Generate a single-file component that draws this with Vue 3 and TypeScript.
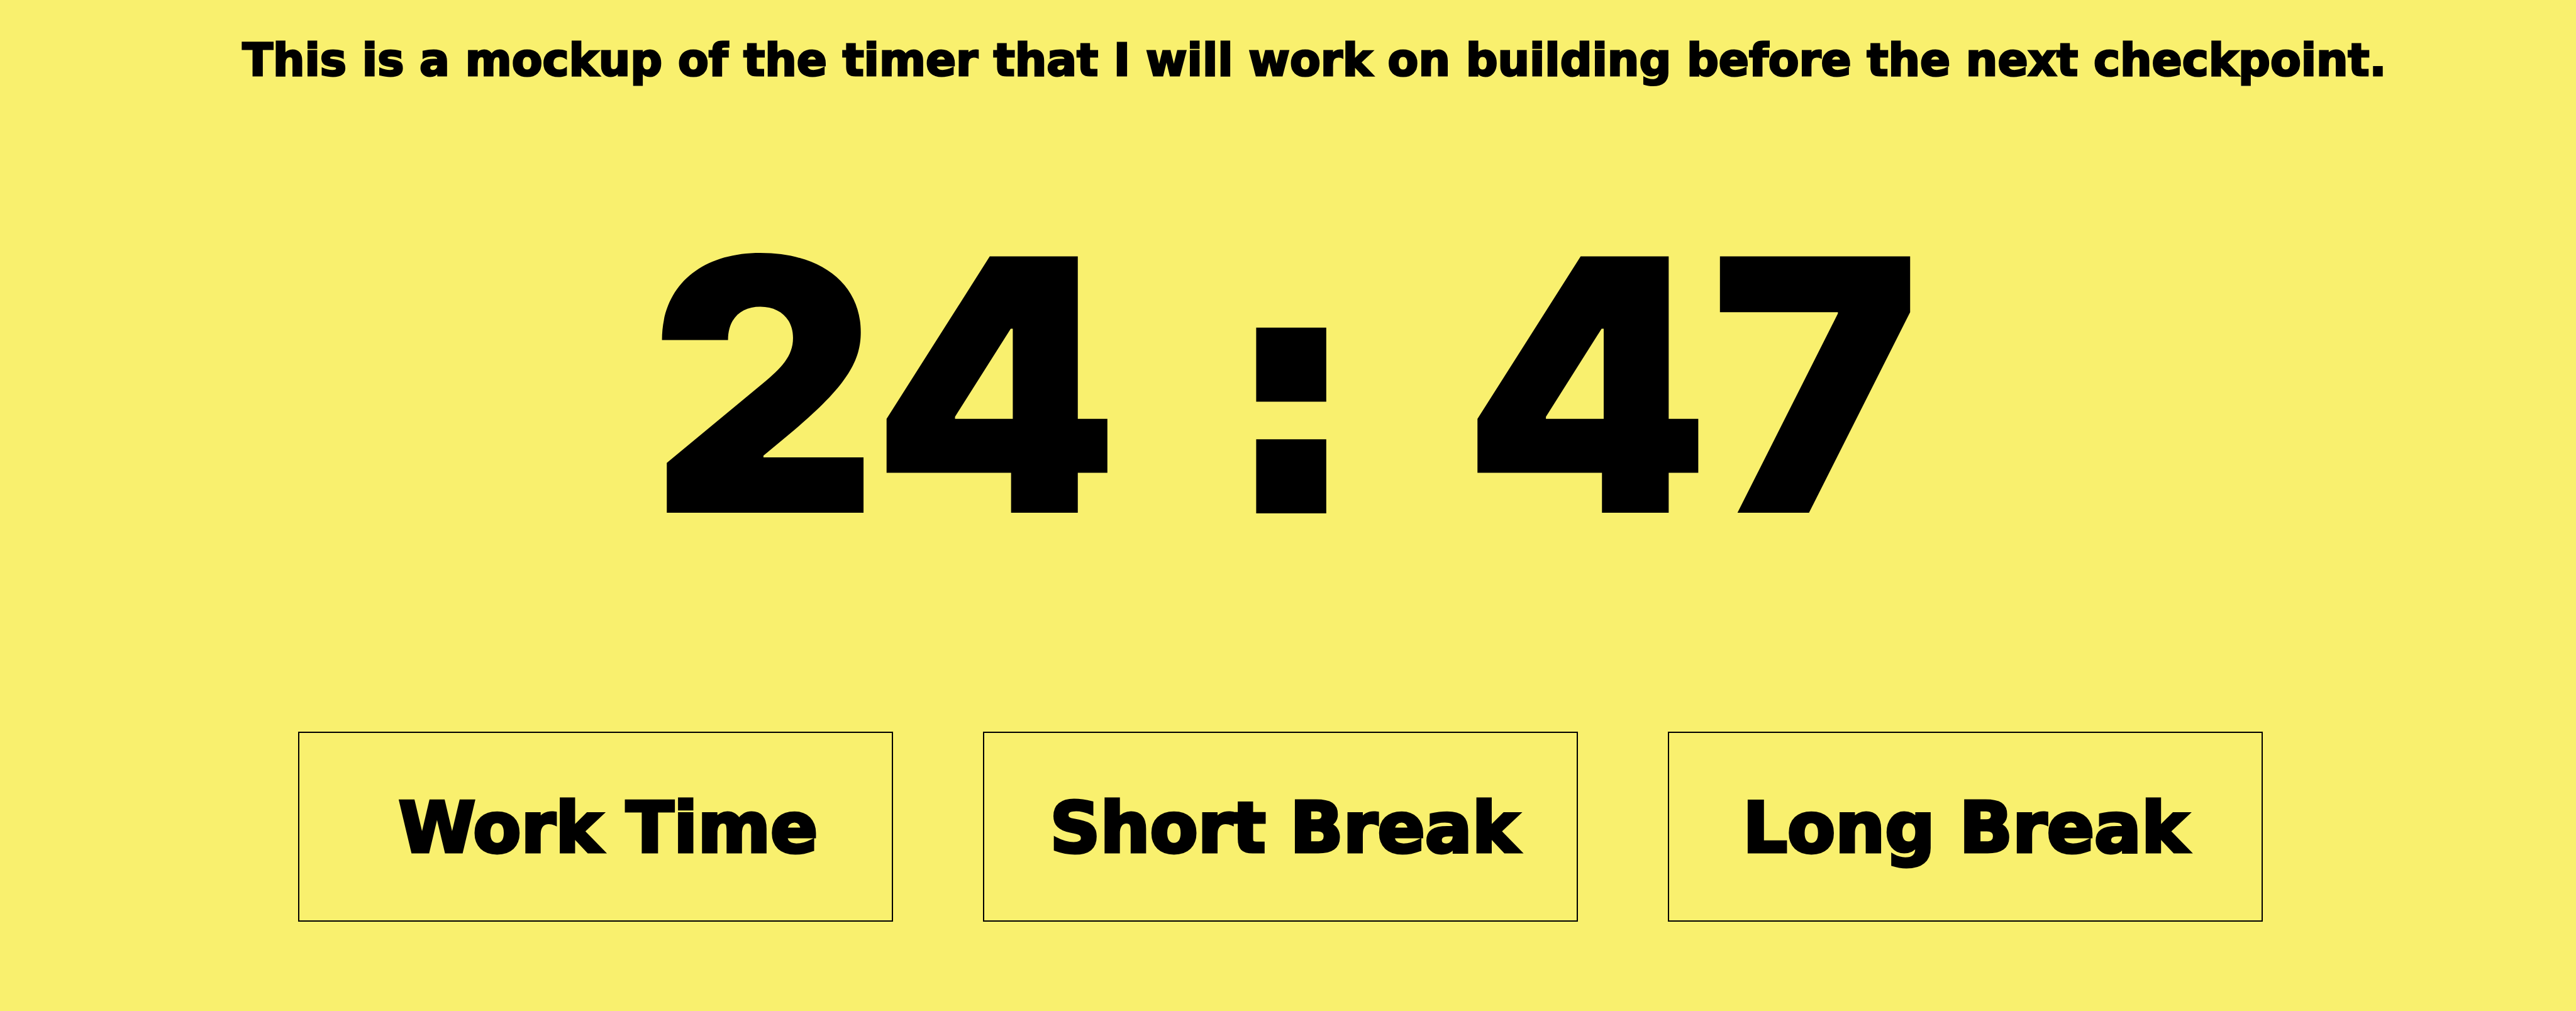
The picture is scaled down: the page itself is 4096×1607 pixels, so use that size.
<script setup lang="ts">
import { ref } from 'vue'

interface Mode {
  id: string
  label: string
}

const modes: Mode[] = [
  { id: 'work', label: 'Work Time' },
  { id: 'short', label: 'Short Break' },
  { id: 'long', label: 'Long Break' },
]

const minutes = ref('24')
const seconds = ref('47')
</script>

<template>
  <main class="page">
    <h1 class="title">This is a mockup of the timer that I will work on building before the next checkpoint.</h1>
    <div class="clock" role="timer">
      <span>{{ minutes }}</span>
      <span class="separator">:</span>
      <span>{{ seconds }}</span>
    </div>
    <nav class="modes">
      <button v-for="mode in modes" :key="mode.id" type="button" class="mode" :class="mode.id">
        {{ mode.label }}
      </button>
    </nav>
  </main>
</template>

<style>
body {
  margin: 0;
  background: #f9f06e;
}
</style>

<style scoped>
.page {
  box-sizing: border-box;
  display: flex;
  flex-direction: column;
  min-height: 100vh;
  padding-top: 52px;
  background: #f9f06e;
  color: #000;
  font-family: "DejaVu Sans", sans-serif;
  font-weight: 700;
}

.title {
  margin: 0;
  padding-left: 84px;
  font-size: 71px;
  font-weight: 700;
  line-height: 88px;
  text-align: center;
  white-space: nowrap;
  -webkit-text-stroke: 3px #000;
}

.clock {
  display: flex;
  justify-content: center;
  gap: 174px;
  margin-top: 191px;
  padding-right: 10px;
  font-family: Inter, "Liberation Sans", sans-serif;
  font-weight: 900;
  font-size: 560px;
  line-height: 560px;
}

.separator {
  font-family: "DejaVu Sans", sans-serif;
  font-size: 496px;
  line-height: 604px;
  -webkit-text-stroke: 24px #000;
}

.modes {
  display: grid;
  grid-template-columns: repeat(3, 1fr);
  gap: 143px;
  margin-top: 228px;
  padding: 0 498px 0 474px;
}

.mode {
  height: 302px;
  padding: 4px 0 0;
  border: 2px solid #000;
  background: transparent;
  color: inherit;
  font: inherit;
  font-size: 111px;
  line-height: 120px;
  text-align: center;
  white-space: nowrap;
  cursor: pointer;
  -webkit-text-stroke: 5px #000;
}

.mode.work {
  padding-left: 40px;
}

.mode.short {
  padding-left: 12px;
}
</style>
